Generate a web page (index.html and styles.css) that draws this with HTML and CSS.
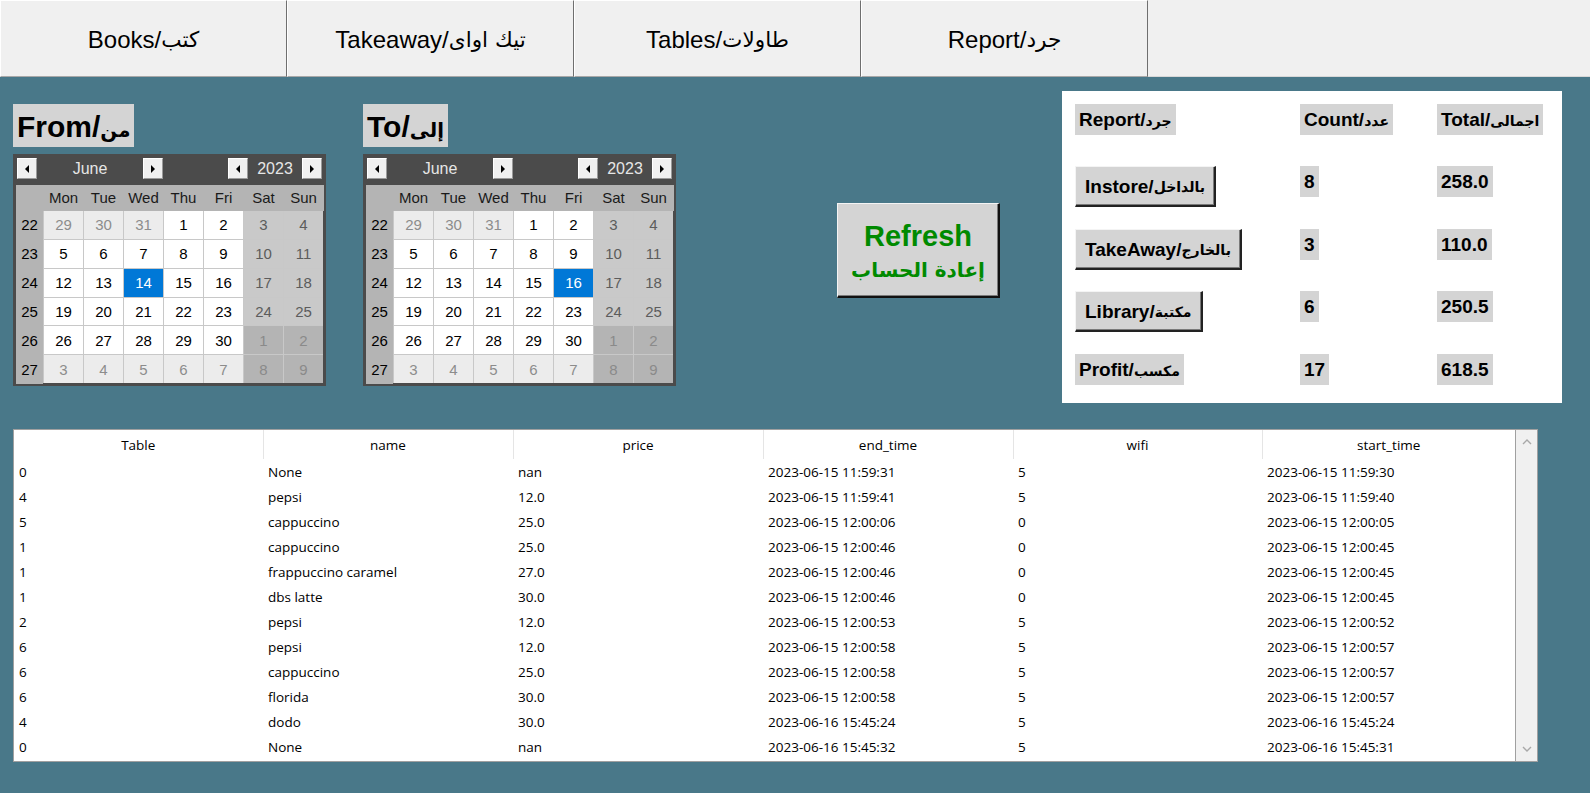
FILE: index.html
```html
<!DOCTYPE html>
<html lang="en">
<head>
<meta charset="utf-8">
<title>Report</title>
<link rel="stylesheet" href="styles.css">
</head>
<body>
<nav class="tabs">
  <div class="tab">Books/<span class="ar-t">كتب</span></div>
  <div class="tab">Takeaway/<span class="ar-t">تيك اواى</span></div>
  <div class="tab">Tables/<span class="ar-t">طاولات</span></div>
  <div class="tab">Report/<span class="ar-t">جرد</span></div>
  <div class="tab-rest"></div>
</nav>

<main class="main">
  <section class="top">
    <div class="cal-group">
      <div class="cal-label">From/<span class="ar">من</span></div>
      <div class="cal">
        <div class="cal-head">
          <span class="arrow left"></span><span class="month">June</span><span class="arrow right"></span>
          <span class="spacer"></span>
          <span class="arrow left"></span><span class="year">2023</span><span class="arrow right"></span>
        </div>
        <div class="cal-grid">
          <div class="hd"></div><div class="hd">Mon</div><div class="hd">Tue</div><div class="hd">Wed</div><div class="hd">Thu</div><div class="hd">Fri</div><div class="hd">Sat</div><div class="hd">Sun</div>
          <div class="wk">22</div><div class="o">29</div><div class="o">30</div><div class="o">31</div><div class="d">1</div><div class="d">2</div><div class="w">3</div><div class="w">4</div>
          <div class="wk">23</div><div class="d">5</div><div class="d">6</div><div class="d">7</div><div class="d">8</div><div class="d">9</div><div class="w">10</div><div class="w">11</div>
          <div class="wk">24</div><div class="d">12</div><div class="d">13</div><div class="d sel">14</div><div class="d">15</div><div class="d">16</div><div class="w">17</div><div class="w">18</div>
          <div class="wk">25</div><div class="d">19</div><div class="d">20</div><div class="d">21</div><div class="d">22</div><div class="d">23</div><div class="w">24</div><div class="w">25</div>
          <div class="wk">26</div><div class="d">26</div><div class="d">27</div><div class="d">28</div><div class="d">29</div><div class="d">30</div><div class="wo">1</div><div class="wo">2</div>
          <div class="wk">27</div><div class="o">3</div><div class="o">4</div><div class="o">5</div><div class="o">6</div><div class="o">7</div><div class="wo">8</div><div class="wo">9</div>
        </div>
      </div>
    </div>

    <div class="cal-group second">
      <div class="cal-label">To/<span class="ar">إلى</span></div>
      <div class="cal">
        <div class="cal-head">
          <span class="arrow left"></span><span class="month">June</span><span class="arrow right"></span>
          <span class="spacer"></span>
          <span class="arrow left"></span><span class="year">2023</span><span class="arrow right"></span>
        </div>
        <div class="cal-grid">
          <div class="hd"></div><div class="hd">Mon</div><div class="hd">Tue</div><div class="hd">Wed</div><div class="hd">Thu</div><div class="hd">Fri</div><div class="hd">Sat</div><div class="hd">Sun</div>
          <div class="wk">22</div><div class="o">29</div><div class="o">30</div><div class="o">31</div><div class="d">1</div><div class="d">2</div><div class="w">3</div><div class="w">4</div>
          <div class="wk">23</div><div class="d">5</div><div class="d">6</div><div class="d">7</div><div class="d">8</div><div class="d">9</div><div class="w">10</div><div class="w">11</div>
          <div class="wk">24</div><div class="d">12</div><div class="d">13</div><div class="d">14</div><div class="d">15</div><div class="d sel">16</div><div class="w">17</div><div class="w">18</div>
          <div class="wk">25</div><div class="d">19</div><div class="d">20</div><div class="d">21</div><div class="d">22</div><div class="d">23</div><div class="w">24</div><div class="w">25</div>
          <div class="wk">26</div><div class="d">26</div><div class="d">27</div><div class="d">28</div><div class="d">29</div><div class="d">30</div><div class="wo">1</div><div class="wo">2</div>
          <div class="wk">27</div><div class="o">3</div><div class="o">4</div><div class="o">5</div><div class="o">6</div><div class="o">7</div><div class="wo">8</div><div class="wo">9</div>
        </div>
      </div>
    </div>

    <button class="refresh" type="button">
      <span class="refresh-en">Refresh</span>
      <span class="refresh-ar">إعادة الحساب</span>
    </button>

    <div class="report">
      <div class="lbl">Report/<span class="ar">جرد</span></div>
      <div class="lbl">Count/<span class="ar">عدد</span></div>
      <div class="lbl">Total/<span class="ar">اجمالى</span></div>

      <div class="btn">Instore/<span class="ar">بالداخل</span></div>
      <div class="lbl">8</div>
      <div class="lbl">258.0</div>

      <div class="btn">TakeAway/<span class="ar">بالخارج</span></div>
      <div class="lbl">3</div>
      <div class="lbl">110.0</div>

      <div class="btn">Library/<span class="ar">مكتبة</span></div>
      <div class="lbl">6</div>
      <div class="lbl">250.5</div>

      <div class="lbl">Profit/<span class="ar">مكسب</span></div>
      <div class="lbl">17</div>
      <div class="lbl">618.5</div>
    </div>
  </section>

  <section class="grid-box">
    <table class="grid">
      <colgroup>
        <col class="c1"><col class="c2"><col class="c3"><col class="c4"><col class="c5"><col class="c6">
      </colgroup>
      <thead>
        <tr><th>Table</th><th>name</th><th>price</th><th>end_time</th><th>wifi</th><th>start_time</th></tr>
      </thead>
      <tbody>
        <tr><td>0</td><td>None</td><td>nan</td><td>2023-06-15 11:59:31</td><td>5</td><td>2023-06-15 11:59:30</td></tr>
        <tr><td>4</td><td>pepsi</td><td>12.0</td><td>2023-06-15 11:59:41</td><td>5</td><td>2023-06-15 11:59:40</td></tr>
        <tr><td>5</td><td>cappuccino</td><td>25.0</td><td>2023-06-15 12:00:06</td><td>0</td><td>2023-06-15 12:00:05</td></tr>
        <tr><td>1</td><td>cappuccino</td><td>25.0</td><td>2023-06-15 12:00:46</td><td>0</td><td>2023-06-15 12:00:45</td></tr>
        <tr><td>1</td><td>frappuccino caramel</td><td>27.0</td><td>2023-06-15 12:00:46</td><td>0</td><td>2023-06-15 12:00:45</td></tr>
        <tr><td>1</td><td>dbs latte</td><td>30.0</td><td>2023-06-15 12:00:46</td><td>0</td><td>2023-06-15 12:00:45</td></tr>
        <tr><td>2</td><td>pepsi</td><td>12.0</td><td>2023-06-15 12:00:53</td><td>5</td><td>2023-06-15 12:00:52</td></tr>
        <tr><td>6</td><td>pepsi</td><td>12.0</td><td>2023-06-15 12:00:58</td><td>5</td><td>2023-06-15 12:00:57</td></tr>
        <tr><td>6</td><td>cappuccino</td><td>25.0</td><td>2023-06-15 12:00:58</td><td>5</td><td>2023-06-15 12:00:57</td></tr>
        <tr><td>6</td><td>florida</td><td>30.0</td><td>2023-06-15 12:00:58</td><td>5</td><td>2023-06-15 12:00:57</td></tr>
        <tr><td>4</td><td>dodo</td><td>30.0</td><td>2023-06-16 15:45:24</td><td>5</td><td>2023-06-16 15:45:24</td></tr>
        <tr><td>0</td><td>None</td><td>nan</td><td>2023-06-16 15:45:32</td><td>5</td><td>2023-06-16 15:45:31</td></tr>
      </tbody>
    </table>
    <div class="vscroll">
      <svg class="chev" width="10" height="6" viewBox="0 0 10 6"><polyline points="1,5 5,1 9,5" fill="none" stroke="#a8a8a8" stroke-width="1.4"/></svg>
      <svg class="chev" width="10" height="6" viewBox="0 0 10 6"><polyline points="1,1 5,5 9,1" fill="none" stroke="#a8a8a8" stroke-width="1.4"/></svg>
    </div>
  </section>
</main>
</body>
</html>
```

FILE: styles.css
```css
html, body {
  margin: 0;
  padding: 0;
}

body {
  width: 1590px;
  height: 793px;
  overflow: hidden;
  background: #497889;
  font-family: "Liberation Sans", Arial, "DejaVu Sans", sans-serif;
  color: #000;
}

.ar {
  font-family: "DejaVu Sans", sans-serif;
  font-size: 0.74em;
  font-weight: bold;
}

.ar-t {
  font-family: "DejaVu Sans", sans-serif;
  font-size: 0.9em;
}

/* ---------- tabs ---------- */
.tabs {
  display: flex;
  height: 77px;
  background: #f0f0f0;
}

.tab {
  width: 287px;
  box-sizing: border-box;
  border-top: 1px solid #ffffff;
  border-left: 1px solid #ffffff;
  border-right: 1px solid #6f6f6f;
  border-bottom: 1px solid #a8a8a8;
  display: flex;
  align-items: center;
  justify-content: center;
  font-size: 24px;
  padding-top: 2px;
  white-space: pre;
}

.tab-rest {
  flex: 1;
  border-bottom: 1px solid #d8d8d8;
}

/* ---------- top area ---------- */
.top {
  display: flex;
  align-items: flex-start;
  padding-left: 13px;
}

.cal-group {
  display: flex;
  flex-direction: column;
  align-items: flex-start;
  width: 313px;
}

.cal-group.second {
  margin-left: 37px;
}

.cal-label {
  margin-top: 27px;
  height: 43px;
  line-height: 45px;
  padding: 0 4px;
  background: #d4d4d4;
  font-weight: bold;
  font-size: 30px;
  white-space: nowrap;
}

.cal-label .ar {
  font-size: 0.66em;
}

.cal {
  margin-top: 7px;
  width: 313px;
  height: 232px;
  box-sizing: border-box;
  padding: 3px;
  background: #4b4b4b;
  display: flex;
  flex-direction: column;
}

.cal-head {
  height: 28px;
  display: flex;
  align-items: flex-start;
  padding-top: 1px;
  box-sizing: border-box;
  color: #e6e6e6;
  font-size: 16px;
}

.arrow {
  width: 20px;
  height: 21px;
  box-sizing: border-box;
  background: #f0f0f0;
  border-top: 1px solid #ffffff;
  border-left: 1px solid #ffffff;
  border-right: 1px solid #9a9a9a;
  border-bottom: 1px solid #9a9a9a;
  display: flex;
  align-items: center;
  justify-content: center;
  flex: none;
}

.arrow::before {
  content: "";
  width: 0;
  height: 0;
  border-top: 4px solid transparent;
  border-bottom: 4px solid transparent;
}

.arrow.left::before {
  border-right: 4px solid #000;
}

.arrow.right::before {
  border-left: 4px solid #000;
}

.cal-head .arrow:first-child {
  margin-left: 1px;
}

.month {
  width: 106px;
  text-align: center;
  line-height: 21px;
}

.spacer {
  width: 65px;
}

.year {
  width: 54px;
  text-align: center;
  line-height: 21px;
}

.cal-grid {
  flex: 1;
  display: grid;
  grid-template-columns: 27px repeat(7, 39px);
  grid-template-rows: 25px repeat(6, 1fr);
  column-gap: 1px;
  row-gap: 1px;
  background: #c8c8c8;
  font-size: 15px;
}

.cal-grid > div {
  display: flex;
  align-items: center;
  justify-content: center;
}

.hd {
  background: #b4b4b4;
  color: #1a1a1a;
  box-shadow: 1px 0 0 #b4b4b4, 0 1px 0 #b4b4b4, 1px 1px 0 #b4b4b4;
}

.wk {
  background: #b4b4b4;
  color: #000;
  box-shadow: 0 1px 0 #b4b4b4;
}

.d {
  background: #ffffff;
  color: #000;
}

.o {
  background: #ececec;
  color: #8c8c8c;
}

.w {
  background: #c9c9c9;
  color: #5c5c5c;
}

.wo {
  background: #b4b4b4;
  color: #8a8a8a;
}

.d.sel {
  background: #0078d7;
  color: #ffffff;
}

/* ---------- refresh ---------- */
.refresh {
  margin-top: 126px;
  margin-left: 161px;
  width: 163px;
  height: 95px;
  box-sizing: border-box;
  background: #d4d4d4;
  border-style: solid;
  border-width: 1px 2px 2px 1px;
  border-color: #f4f4f4 #111 #111 #f4f4f4;
  box-shadow: inset -1px -1px 0 #7a7a7a;
  display: flex;
  flex-direction: column;
  align-items: center;
  justify-content: center;
  padding: 6px 0 0 0;
  font-family: "Liberation Sans", Arial, "DejaVu Sans", sans-serif;
  color: #008a00;
  font-weight: bold;
}

.refresh-en {
  font-size: 29px;
  line-height: 34px;
}

.refresh-ar {
  font-family: "DejaVu Sans", sans-serif;
  font-size: 20px;
  line-height: 34px;
  white-space: nowrap;
}

/* ---------- report panel ---------- */
.report {
  margin-top: 14px;
  margin-left: 62px;
  width: 500px;
  height: 312px;
  box-sizing: border-box;
  padding: 13px;
  background: #ffffff;
  display: grid;
  grid-template-columns: 225px 137px 1fr;
  grid-template-rows: 62px 63px 62px 63px 1fr;
  align-items: start;
  justify-items: start;
  font-weight: bold;
  font-size: 19px;
}

.lbl {
  height: 31px;
  line-height: 32px;
  padding: 0 4px;
  background: #d4d4d4;
  white-space: nowrap;
}

.btn {
  height: 41px;
  box-sizing: border-box;
  padding: 2px 9px 0 9px;
  background: #d4d4d4;
  border-style: solid;
  border-width: 1px 2px 2px 1px;
  border-color: #f4f4f4 #222 #222 #f4f4f4;
  box-shadow: inset -1px -1px 0 #7a7a7a;
  display: flex;
  align-items: center;
  white-space: nowrap;
}

/* ---------- data grid ---------- */
.grid-box {
  margin: 26px 0 0 13px;
  width: 1525px;
  height: 333px;
  box-sizing: border-box;
  border: 1px solid #a0a0a0;
  background: #ffffff;
  display: flex;
}

.grid {
  width: 1501px;
  border-collapse: collapse;
  table-layout: fixed;
  font-family: "Open Sans", "Noto Sans", sans-serif;
  font-size: 13.5px;
  align-self: flex-start;
}

.c1 { width: 249px; }
.c2 { width: 250px; }
.c3 { width: 250px; }
.c4 { width: 250px; }
.c5 { width: 249px; }
.c6 { width: 253px; }

.grid th {
  height: 29px;
  padding: 0;
  font-weight: normal;
  text-align: center;
  border-right: 1px solid #e5e5e5;
  color: #000;
}

.grid th:last-child {
  border-right: none;
}

.grid td {
  height: 25px;
  padding: 0 0 0 5px;
  white-space: nowrap;
  color: #000;
}

.vscroll {
  width: 22px;
  box-sizing: border-box;
  border-left: 1px solid #a0a0a0;
  background: #f0f0f0;
  display: flex;
  flex-direction: column;
  align-items: center;
  justify-content: space-between;
  padding: 9px 0 9px 0;
}
```
